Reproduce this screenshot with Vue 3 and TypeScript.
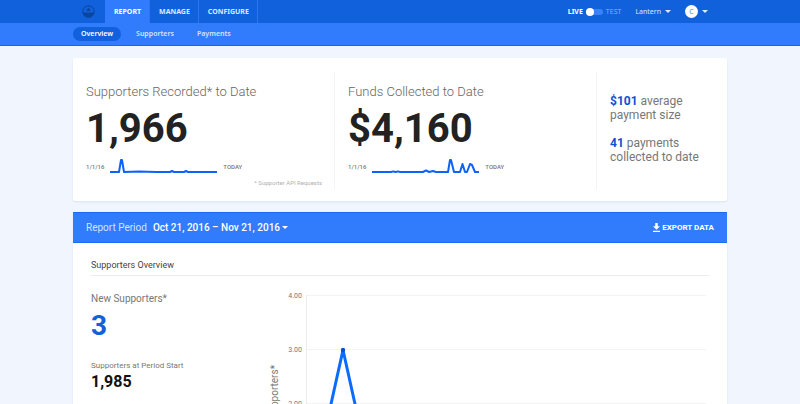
<script setup lang="ts">
import { ref } from 'vue'

interface SummaryStat {
  title: string
  value: string
  points: string
  note?: string
}

const tabs: string[] = ['Report', 'Manage', 'Configure']
const activeTab = ref('Report')
const sections: string[] = ['Overview', 'Supporters', 'Payments']
const activeSection = ref('Overview')
const testMode = ref(false)

const stats: SummaryStat[] = [
  {
    title: 'Supporters Recorded* to Date',
    value: '1,966',
    points: '0,13 9,13 11,1 12,1 14,13 29,12.6 46,13 60,13 62,12 64,13 74,13 76,12 78,13 107,13',
    note: '* Supporter API Requests',
  },
  {
    title: 'Funds Collected to Date',
    value: '$4,160',
    points:
      '0,13 19,13 21,12.4 24,13 26,12.4 28,13 51,13 54,11.4 57,13 61,12 64,13 76,13 78,1 79,1 82,13 88,13 90.5,5 93,13 95,13 98,5 100,6 103,13 107,13',
  },
]

const gridLines = [4, 3, 2, 1, 0].map((value) => ({
  label: value.toFixed(2),
  y: 10 + (4 - value) * 54,
}))
</script>

<template>
  <div class="page">
    <header>
      <div class="topbar">
        <div class="container topbar-inner">
          <a class="logo" href="#" aria-label="Home">
            <svg width="13" height="13" viewBox="0 0 26 26" aria-hidden="true">
              <circle cx="13" cy="13" r="11.5" fill="none" stroke="#0b459f" stroke-width="2" />
              <path d="M2 15h22a11 10 0 0 1-22 0z" fill="#0b459f" />
              <path d="M13 5l4.5 7h-9z" fill="#0b459f" />
            </svg>
          </a>
          <nav class="tabs" aria-label="Main">
            <a
              v-for="tab in tabs"
              :key="tab"
              href="#"
              :class="['tab', { active: tab === activeTab }]"
              @click.prevent="activeTab = tab"
            >{{ tab }}</a>
          </nav>
          <div class="account">
            <label class="mode">
              <span class="live">LIVE</span>
              <input v-model="testMode" type="checkbox" role="switch" />
              <span class="test">TEST</span>
            </label>
            <button type="button" class="menu">Lantern <span class="caret"></span></button>
            <button type="button" class="menu"><span class="avatar">C</span><span class="caret"></span></button>
          </div>
        </div>
      </div>
      <div class="subbar">
        <nav class="container pills" aria-label="Report sections">
          <a
            v-for="section in sections"
            :key="section"
            href="#"
            :class="['pill', { active: section === activeSection }]"
            @click.prevent="activeSection = section"
          >{{ section }}</a>
        </nav>
      </div>
    </header>

    <main class="container content">
      <section class="card summary">
        <div v-for="stat in stats" :key="stat.title" class="stat">
          <h2>{{ stat.title }}</h2>
          <p class="big">{{ stat.value }}</p>
          <div class="trend">
            <span>1/1/16</span>
            <svg width="107" height="16" viewBox="0 0 107 16" aria-hidden="true">
              <polyline :points="stat.points" fill="none" stroke="#0b63fb" stroke-width="2" stroke-linejoin="round" />
            </svg>
            <span>TODAY</span>
          </div>
          <p v-if="stat.note" class="note">{{ stat.note }}</p>
        </div>
        <div class="facts">
          <p><strong>$101</strong> average<br />payment size</p>
          <p><strong>41</strong> payments<br />collected to date</p>
        </div>
      </section>

      <section class="card report">
        <div class="report-bar">
          <span class="period-label">Report Period</span>
          <button type="button" class="period">Oct 21, 2016 – Nov 21, 2016<span class="caret"></span></button>
          <button type="button" class="export">
            <svg width="7" height="9" viewBox="0 0 14 18" aria-hidden="true">
              <path d="M4.5 0h5v6.5H14l-7 7-7-7h4.5zM0 15.5h14V18H0z" fill="#fff" />
            </svg>
            EXPORT DATA
          </button>
        </div>
        <div class="report-body">
          <h3>Supporters Overview</h3>
          <div class="overview">
            <div class="figures">
              <p class="label">New Supporters*</p>
              <p class="new-count">3</p>
              <p class="small-label">Supporters at Period Start</p>
              <p class="start-count">1,985</p>
            </div>
            <svg class="chart" viewBox="0 0 453 236" role="img" aria-label="New supporters over the period">
              <g v-for="line in gridLines" :key="line.label">
                <line x1="51" x2="450" :y1="line.y + 0.5" :y2="line.y + 0.5" stroke="#f3f3f3" />
                <text x="46" :y="line.y + 3" text-anchor="end" class="tick">{{ line.label }}</text>
              </g>
              <line x1="50.5" x2="50.5" y1="10" y2="226" stroke="#ececec" />
              <text transform="translate(22 118) rotate(-90)" text-anchor="middle" class="axis">New Supporters*</text>
              <polyline
                points="51,227 87,65 123,227 450,227"
                fill="none"
                stroke="#0b6bff"
                stroke-width="3"
                stroke-linejoin="round"
              />
              <circle cx="87" cy="65" r="2.2" fill="#0a4fd0" />
            </svg>
          </div>
        </div>
      </section>
    </main>
  </div>
</template>

<style>
body {
  margin: 0;
  background: #f0f5fe;
}
</style>

<style scoped>
.page {
  font-family: Roboto, 'Liberation Sans', sans-serif;
  color: #777;
}
header {
  font-family: 'Noto Sans', Roboto, sans-serif;
}
h2,
h3,
p {
  margin: 0;
  font-weight: 400;
}
a {
  color: inherit;
  text-decoration: none;
}
button {
  padding: 0;
  border: 0;
  background: none;
  color: #fff;
  font: inherit;
  cursor: pointer;
}
.container {
  box-sizing: border-box;
  width: calc(100% - 48px);
  max-width: 654px;
  margin: 0 auto;
}
.topbar {
  background: #1160dc;
}
.topbar-inner {
  display: flex;
  align-items: center;
  height: 23px;
  padding: 0 19px 0 9px;
}
.logo {
  display: flex;
  width: 23px;
}
.tabs {
  display: flex;
  align-self: stretch;
}
.tab {
  display: flex;
  align-items: center;
  padding: 0 8px 0 9px;
  border-right: 1px solid #2b76f0;
  color: #dce9ff;
  font-size: 7px;
  font-weight: 700;
  text-transform: uppercase;
}
.tab.active {
  background: #307cfd;
  color: #fff;
}
.account {
  display: flex;
  align-items: center;
  gap: 14px;
  margin-left: auto;
  font-size: 7px;
}
.mode {
  display: flex;
  align-items: center;
  gap: 3px;
}
.live {
  color: #fff;
  font-weight: 700;
}
.test {
  color: #7fb0ff;
}
.mode input {
  appearance: none;
  display: flex;
  align-items: center;
  width: 17px;
  height: 6px;
  margin: 0;
  border-radius: 3px;
  background: #3a82f8;
}
.mode input::before {
  content: '';
  width: 8px;
  height: 8px;
  border-radius: 50%;
  background: #fff;
}
.mode input:checked::before {
  margin-left: auto;
}
.menu {
  display: flex;
  align-items: center;
  gap: 4px;
  color: #dce9ff;
}
.caret {
  border: 3px solid transparent;
  border-top-color: currentColor;
  border-bottom: 0;
}
.avatar {
  width: 13px;
  border-radius: 50%;
  background: #fff;
  color: #4f86dc;
  line-height: 13px;
}
.subbar {
  border-bottom: 1px solid #1a66e6;
  background: #307cfd;
}
.pills {
  display: flex;
  align-items: center;
  gap: 7px;
  height: 22px;
}
.pill {
  padding: 0 8px;
  border-radius: 7px;
  color: #d3e4ff;
  font-size: 7px;
  font-weight: 600;
  line-height: 14px;
}
.pill.active {
  background: #1160dc;
  color: #fff;
}
.content {
  padding: 12px 0 24px;
}
.card {
  border-radius: 2px;
  background: #fff;
  box-shadow: 0 1px 2px #dbe3f0;
}
.summary {
  display: grid;
  grid-template-columns: 262fr 262fr 130fr;
  padding: 14px 0 12px;
}
.stat {
  padding: 12px 12px 0 13px;
  border-right: 1px solid #f3f3f3;
}
.stat h2 {
  color: #666;
  font-size: 13px;
  font-weight: 300;
  line-height: 16px;
}
.big {
  color: #222;
  font-size: 40px;
  font-weight: 700;
  line-height: 58px;
}
.trend {
  display: flex;
  align-items: center;
  gap: 6px;
  padding-top: 1px;
  font-size: 6px;
  font-weight: 500;
  line-height: 16px;
}
.note {
  padding-top: 2px;
  color: #b0b0b0;
  font-size: 6px;
  line-height: 12px;
  text-align: right;
}
.facts {
  display: grid;
  align-content: start;
  gap: 14px;
  padding: 22px 0 0 13px;
  font-size: 12px;
  font-weight: 400;
  line-height: 14px;
}
.facts strong {
  color: #0b4fd8;
  font-weight: 700;
}
.report {
  margin-top: 11px;
}
.report-bar {
  display: flex;
  align-items: center;
  height: 29px;
  padding: 0 13px;
  border-top: 1px solid #1a6cf6;
  border-bottom: 1px solid #1a6cf6;
  background: #307cfd;
}
.period-label {
  color: #d3e4ff;
  font-size: 10px;
}
.period {
  display: flex;
  align-items: center;
  gap: 2px;
  margin-left: 6px;
  font-size: 10px;
  font-weight: 500;
}
.export {
  display: flex;
  align-items: center;
  gap: 2px;
  margin-left: auto;
  font-size: 8px;
  font-weight: 700;
}
.report-body {
  padding: 14px 18px;
}
.report h3 {
  padding-bottom: 2px;
  border-bottom: 1px solid #ebebeb;
  color: #444;
  font-size: 9px;
  line-height: 16px;
}
.overview {
  display: grid;
  grid-template-columns: 165fr 453fr;
  padding-top: 9px;
}
.label {
  padding-top: 6px;
  font-size: 10px;
  line-height: 16px;
}
.new-count {
  color: #1160dc;
  font-size: 28px;
  font-weight: 700;
  line-height: 38px;
}
.small-label {
  margin-top: 15px;
  font-size: 8px;
  line-height: 12px;
}
.start-count {
  color: #111;
  font-size: 16px;
  font-weight: 700;
  line-height: 20px;
}
.chart {
  display: block;
  width: 100%;
}
.tick {
  fill: #777;
  font-size: 7px;
}
.axis {
  fill: #777;
  font-size: 10px;
}
</style>
